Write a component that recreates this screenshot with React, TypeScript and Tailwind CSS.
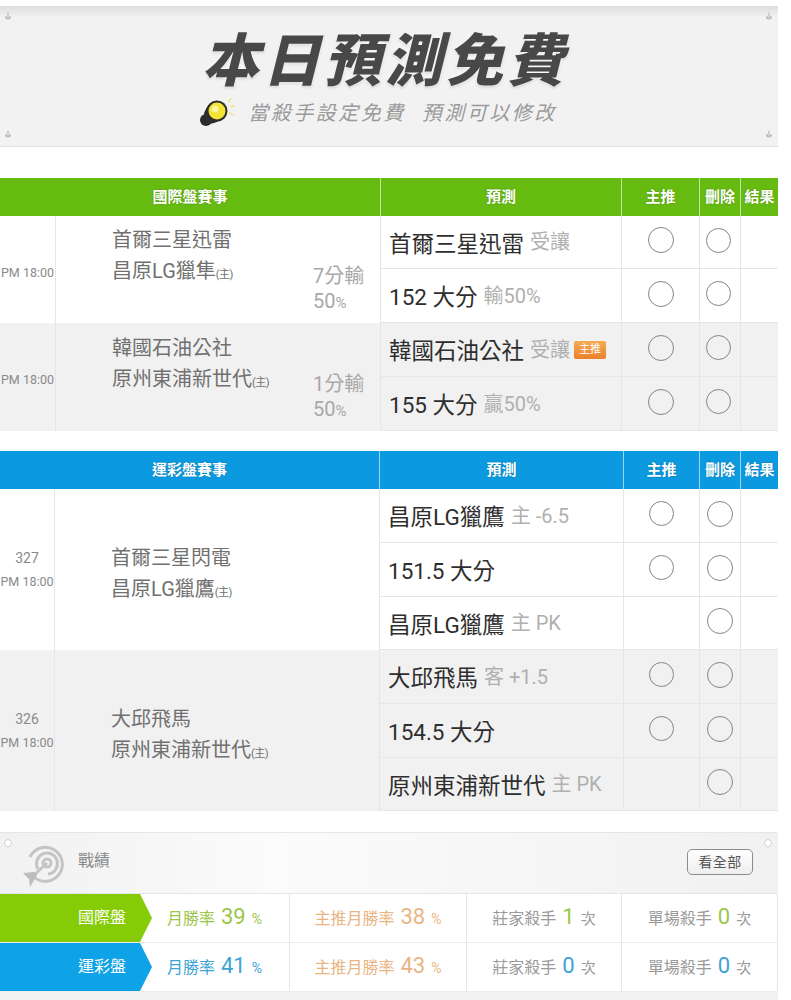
import React from "react";

const font = "font-['Roboto','Noto_Sans_CJK_TC',sans-serif]";

function Screw() {
  return (
    <svg width="8" height="10" viewBox="0 0 8 10">
      <path d="M1 4.5a3 3 0 0 0 6 0" fill="#b5b5b5" />
      <path d="M4 0.5v6" stroke="#d0d0d0" strokeWidth="2" />
    </svg>
  );
}

function Radio({ size, shift }: { size: "lg" | "md"; shift: boolean }) {
  return (
    <span
      className={`block rounded-full border-[1.5px] border-[#858585] -mt-1 ${size === "lg" ? "w-[26px] h-[26px]" : "w-[25px] h-[25px]"} ${shift ? "-ml-[3px]" : ""}`}
    />
  );
}

function Megaphone() {
  return (
    <svg width="36" height="30" viewBox="0 0 36 30" className="mr-[12px]">
      <ellipse cx="7" cy="22" rx="6" ry="6" fill="#2b2b2b" />
      <path d="M5 15 Q9 4 18 3 L27 17 Q19 26 8 26 Z" fill="#2d2d2d" />
      <circle cx="18" cy="13" r="10.5" fill="#2d2d2d" />
      <circle cx="18" cy="13" r="8.5" fill="#f4e332" />
      <circle cx="16" cy="11" r="3.5" fill="#fbf4a0" />
      <path d="M30 3l2-2M32 9l3-1M31 15l3 2" stroke="#efe89a" strokeWidth="2" strokeLinecap="round" />
    </svg>
  );
}

function Target() {
  return (
    <svg width="44" height="44" viewBox="0 0 44 44">
      <g fill="none" stroke="#c4c4c4" strokeWidth="3">
        <path d="M12 34A17 17 0 1 0 8 14" />
        <path d="M16 26A10.5 10.5 0 1 1 26 31" />
        <circle cx="25" cy="20" r="4" />
      </g>
      <path d="M25 20L12 32" stroke="#c4c4c4" strokeWidth="3" />
      <path d="M1 30l11-1 3 3-1 2-6 10-1-8z" fill="#bdbdbd" />
    </svg>
  );
}

type Pred = { main: string; sub: string; badge?: boolean; push?: boolean };
type Match = {
  no?: string;
  teams: [string, string];
  handicap?: [string, string];
  bg: string;
  preds: Pred[];
};

function Cell({ bg, className, children }: { bg: string; className?: string; children?: React.ReactNode }) {
  return <div className={`${bg} border-l border-b border-[#e6e6e6] flex items-center ${className ?? ""}`}>{children}</div>;
}

function MatchRows({ m, push, del, shiftDel }: { m: Match; push: "lg" | "md"; del: "lg" | "md"; shiftDel: boolean }) {
  const span = m.preds.length === 3 ? "row-span-3" : "row-span-2";
  return (
    <>
      <div
        className={`${m.bg} ${span} flex flex-col items-center justify-center text-[12.5px] leading-[24px] text-[#8a8a8a] whitespace-nowrap ${m.no ? "" : "pt-[6px]"}`}
      >
        {m.no && <span className="text-[14px]">{m.no}</span>}
        <span>PM 18:00</span>
      </div>
      <div className={`${m.bg} ${span} border-l border-[#e6e6e6] flex`}>
        <div
          className={`pl-[56px] flex-1 flex flex-col justify-center text-[20px] leading-[31px] text-[#707070] whitespace-nowrap ${m.handicap ? "pb-[24px]" : "pt-[11px]"}`}
        >
          <span>{m.teams[0]}</span>
          <span>
            {m.teams[1]}
            <span className="text-[11px] tracking-[-0.5px]">(主)</span>
          </span>
        </div>
        {m.handicap && (
          <div className="w-[67px] shrink-0 flex flex-col justify-center pt-[41px] text-[#a8a8a8] text-[20px] leading-[25px]">
            <span>{m.handicap[0]}</span>
            <span>
              {m.handicap[1]}
              <span className="text-[15px]">%</span>
            </span>
          </div>
        )}
      </div>
      {m.preds.map((p, i) => (
        <React.Fragment key={i}>
          <Cell bg={m.bg} className="pl-[8px] pt-[4px] whitespace-nowrap">
            <span className="text-[22.5px] text-[#2e2e2e] leading-none">{p.main}</span>
            <span className="text-[20px] text-[#b0b0b0] ml-[6px] leading-none -mt-[4px]">{p.sub}</span>
            {p.badge && (
              <span className="ml-[4px] w-[32px] h-[18px] rounded-[2px] bg-gradient-to-b from-[#f5ab55] to-[#e9802a] text-white text-[11px] leading-[18px] text-center -mt-[4px]">
                主推
              </span>
            )}
          </Cell>
          <Cell bg={m.bg} className="justify-center">
            {p.push !== false && <Radio size={push} shift={false} />}
          </Cell>
          <Cell bg={m.bg} className="justify-center">
            <Radio size={del} shift={shiftDel} />
          </Cell>
          <Cell bg={m.bg} />
        </React.Fragment>
      ))}
    </>
  );
}

function Th({ children, className }: { children?: React.ReactNode; className?: string }) {
  return (
    <div
      className={`h-[38px] flex items-center justify-center text-white font-bold text-[15px] whitespace-nowrap border-l border-white/60 [text-shadow:0_0_2px_rgba(0,0,0,0.25)] ${className ?? ""}`}
    >
      {children}
    </div>
  );
}

function HeaderCells({ bg, title }: { bg: string; title: string }) {
  return (
    <>
      <div className={`${bg} col-span-2 h-[38px] flex items-center justify-center text-white font-bold text-[15px] [text-shadow:0_0_2px_rgba(0,0,0,0.25)]`}>{title}</div>
      <Th className={bg}>預測</Th>
      <Th className={bg}>主推</Th>
      <Th className={bg}>刪除</Th>
      <Th className={bg}>結果</Th>
    </>
  );
}

const intl: Match[] = [
  {
    teams: ["首爾三星迅雷", "昌原LG獵隼"],
    handicap: ["7分輸", "50"],
    bg: "bg-white",
    preds: [
      { main: "首爾三星迅雷", sub: "受讓" },
      { main: "152 大分", sub: "輸50%" },
    ],
  },
  {
    teams: ["韓國石油公社", "原州東浦新世代"],
    handicap: ["1分輸", "50"],
    bg: "bg-[#f1f1f1]",
    preds: [
      { main: "韓國石油公社", sub: "受讓", badge: true },
      { main: "155 大分", sub: "贏50%" },
    ],
  },
];

const sports: Match[] = [
  {
    no: "327",
    teams: ["首爾三星閃電", "昌原LG獵鷹"],
    bg: "bg-white",
    preds: [
      { main: "昌原LG獵鷹", sub: "主 -6.5" },
      { main: "151.5 大分", sub: "" },
      { main: "昌原LG獵鷹", sub: "主 PK", push: false },
    ],
  },
  {
    no: "326",
    teams: ["大邱飛馬", "原州東浦新世代"],
    bg: "bg-[#f1f1f1]",
    preds: [
      { main: "大邱飛馬", sub: "客 +1.5" },
      { main: "154.5 大分", sub: "" },
      { main: "原州東浦新世代", sub: "主 PK", push: false },
    ],
  },
];

function Stat({
  label,
  value,
  unit,
  labelColor,
  valueColor,
  unitSize,
}: {
  label: string;
  value: string;
  unit: string;
  labelColor: string;
  valueColor: string;
  unitSize: string;
}) {
  return (
    <div className="flex items-baseline justify-center whitespace-nowrap pt-[9px] border-r border-[#e6e6e6]">
      <span className={`text-[16px] ${labelColor}`}>{label}</span>
      <span className={`text-[22px] leading-[28px] mx-[6px] ${valueColor}`}>{value}</span>
      <span className={`${unitSize} ${labelColor}`}>{unit}</span>
    </div>
  );
}

function StatRow({
  name,
  bg,
  accent,
  rate1,
  rate2,
  k1,
  k2,
}: {
  name: string;
  bg: string;
  accent: string;
  rate1: string;
  rate2: string;
  k1: string;
  k2: string;
}) {
  return (
    <div className="grid grid-cols-[140px_150px_177px_155px_156px] h-[49px] border-b border-[#ececec]">
      <div className={`relative ${bg} flex items-center justify-end pr-[14px] text-white text-[16px]`}>
        {name}
        <span className={`absolute left-full top-0 h-full w-[12px] ${bg} [clip-path:polygon(0_0,100%_50%,0_100%)]`} />
      </div>
      <Stat label="月勝率" value={rate1} unit="%" labelColor={accent} valueColor={accent} unitSize="text-[14px]" />
      <Stat label="主推月勝率" value={rate2} unit="%" labelColor="text-[#e9b583]" valueColor="text-[#e9b583]" unitSize="text-[14px]" />
      <Stat label="莊家殺手" value={k1} unit="次" labelColor="text-[#9a9a9a]" valueColor={accent} unitSize="text-[15px]" />
      <Stat label="單場殺手" value={k2} unit="次" labelColor="text-[#9a9a9a]" valueColor={accent} unitSize="text-[15px]" />
    </div>
  );
}

export default function App() {
  return (
    <div className={`w-[791px] h-[1000px] overflow-hidden bg-white ${font}`}>
      <div className="w-[778px] pt-[6px]">
        <div className="relative h-[141px] bg-gradient-to-b from-[#dedede] via-[#f2f2f2] via-[8%] to-[#f2f2f2] border-b border-[#e2e2e2] flex flex-col items-center">
          <span className="absolute left-[4px] top-[6px]"><Screw /></span>
          <span className="absolute right-[5px] top-[6px]"><Screw /></span>
          <span className="absolute left-[4px] bottom-[6px]"><Screw /></span>
          <span className="absolute right-[5px] bottom-[6px]"><Screw /></span>
          <div className="mt-[23px] h-[64px] flex items-center -ml-[8px] text-[57px] leading-none font-black italic tracking-[4px] text-[#484848] whitespace-nowrap [text-shadow:0_0_3px_#fff,0_0_5px_#fff,0_1px_3px_#999]">
            本日預測免費
          </div>
          <div className="mt-[5px] flex items-center whitespace-nowrap -ml-[22px]">
            <Megaphone />
            <span className="text-[20px] leading-[30px] italic tracking-[2.5px] text-[#9a9a9a] ml-[1px]">
              當殺手設定免費<span className="ml-[16px]">預測可以修改</span>
            </span>
          </div>
        </div>

        <div className="h-[31px]" />
        <div className="grid grid-cols-[55px_325px_241px_78px_41px_38px] grid-rows-[38px_53px_54px_54px_54px]">
          <HeaderCells bg="bg-[#66bb11]" title="國際盤賽事" />
          {intl.map((m, i) => (
            <MatchRows key={i} m={m} push="lg" del="md" shiftDel />
          ))}
        </div>

        <div className="h-[20px]" />
        <div className="grid grid-cols-[54px_325px_244px_76px_41px_38px] grid-rows-[38px_54px_54px_53px_54px_54px_53px]">
          <HeaderCells bg="bg-[#0b9ae0]" title="運彩盤賽事" />
          {sports.map((m, i) => (
            <MatchRows key={i} m={m} push="md" del="lg" shiftDel={false} />
          ))}
        </div>

        <div className="h-[21px]" />
        <div className="relative border-t border-[#e6e6e6]">
          <div className="relative h-[61px] bg-gradient-to-r from-[#f1f1f1] via-[#fbfbfb] via-[35%] to-[#f1f1f1] border-b border-[#e6e6e6] flex items-center">
            <span className="absolute left-[4px] top-[6px] w-[8px] h-[8px] rounded-full border border-[#cfcfcf] bg-white" />
            <span className="absolute right-[6px] top-[6px] w-[8px] h-[8px] rounded-full border border-[#cfcfcf] bg-white" />
            <div className="ml-[22px] mt-[3px]"><Target /></div>
            <span className="ml-[12px] -mt-[4px] text-[16px] text-[#8a8a8a]">戰績</span>
            <button className="ml-auto mr-[25px] -mt-[2px] w-[66px] h-[26px] rounded-[5px] border border-[#8c8c8c] bg-gradient-to-b from-white to-[#eeeeee] text-[14px] text-[#555] tracking-[0.5px]">
              看全部
            </button>
          </div>
          <StatRow name="國際盤" bg="bg-[#86cc06]" accent="text-[#9cc64a]" rate1="39" rate2="38" k1="1" k2="0" />
          <StatRow name="運彩盤" bg="bg-[#0ea2e6]" accent="text-[#3da3d6]" rate1="41" rate2="43" k1="0" k2="0" />
          <div className="h-[12px] bg-[#f1f1f1]" />
        </div>
      </div>
    </div>
  );
}
